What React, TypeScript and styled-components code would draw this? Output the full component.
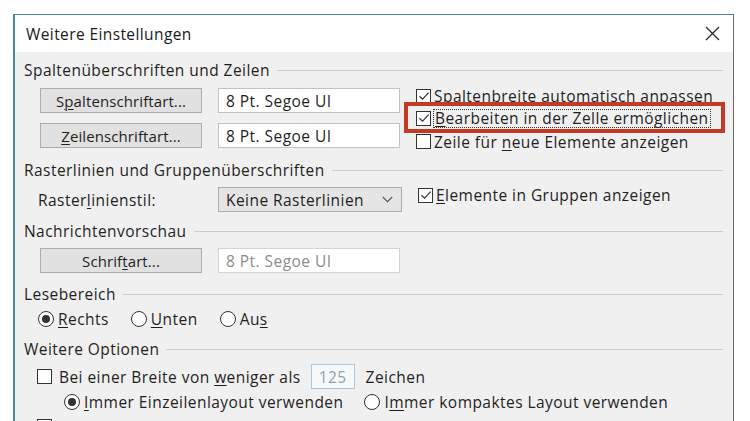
import React from "react";
import styled, { createGlobalStyle } from "styled-components";

const GlobalStyle = createGlobalStyle`
  html, body {
    margin: 0;
    padding: 0;
    background: #ffffff;
    height: 421px;
    overflow: hidden;
  }
  body {
    font-family: "Open Sans", "Noto Sans", "DejaVu Sans", sans-serif;
    color: #1f1f1f;
  }
`;

const Page = styled.div`
  padding: 14px 0 0 13px;
`;

const Dialog = styled.div`
  width: 721px;
  height: 520px;
  box-sizing: border-box;
  border: 1px solid #4a86a3;
  border-left-width: 2px;
  border-right-color: #6b6b6b;
  background: #f0f0f0;
  display: flex;
  flex-direction: column;
`;

const TitleBar = styled.div`
  height: 37px;
  background: #ffffff;
  display: flex;
  align-items: center;
  justify-content: space-between;
  padding: 0 12px 0 11px;
  flex-shrink: 0;
`;

const Title = styled.div`
  font-size: 15.5px;
  color: #1b1b1b;
  letter-spacing: 0.4px;
`;

const CloseButton = styled.div`
  width: 18px;
  height: 18px;
  display: flex;
  align-items: center;
  justify-content: center;
`;

const Body = styled.div`
  padding: 8px 10px 0 9px;
  display: flex;
  flex-direction: column;
  font-size: 15.5px;
  letter-spacing: 0.45px;
`;

const SectionHeader = styled.div<{ $mt?: number }>`
  display: flex;
  align-items: center;
  gap: 7px;
  height: 20px;
  margin-top: ${(p) => p.$mt ?? 0}px;
  white-space: nowrap;
  &::after {
    content: "";
    flex: 1;
    height: 1px;
    background: #cdcdcd;
    margin-top: 1px;
  }
`;

const SectionBody = styled.div<{ $mt?: number }>`
  display: flex;
  align-items: flex-start;
  margin-top: ${(p) => p.$mt ?? 0}px;
  padding-left: 16px;
`;

const FieldGrid = styled.div`
  display: grid;
  grid-template-columns: 162px 182px;
  column-gap: 16px;
  row-gap: 10px;
`;

const PushButton = styled.div`
  height: 25px;
  box-sizing: border-box;
  background: #e1e1e1;
  border: 1px solid #adadad;
  display: flex;
  align-items: center;
  justify-content: center;
  white-space: nowrap;
  font-size: 15px;
  letter-spacing: 0.1px;
`;

const TextField = styled.div<{ $disabled?: boolean }>`
  height: 25px;
  box-sizing: border-box;
  background: #ffffff;
  border: 1px solid ${(p) => (p.$disabled ? "#d4d4d4" : "#c2c2c2")};
  color: ${(p) => (p.$disabled ? "#8c8c8c" : "#1f1f1f")};
  display: flex;
  align-items: center;
  padding-left: 7px;
  white-space: nowrap;
`;

const Select = styled.div`
  width: 184px;
  height: 25px;
  box-sizing: border-box;
  background: #e5e5e5;
  border: 1px solid #adadad;
  display: flex;
  align-items: center;
  justify-content: space-between;
  padding: 0 8px 0 7px;
  white-space: nowrap;
`;

const Label = styled.div`
  width: 162px;
  height: 25px;
  display: flex;
  align-items: center;
  box-sizing: border-box;
  margin-left: -2px;
  margin-right: 18px;
  white-space: nowrap;
`;

const CheckColumn = styled.div`
  display: flex;
  flex-direction: column;
  margin-left: 16px;
  margin-top: -3px;
`;

const CheckRow = styled.div<{ $h?: number }>`
  position: relative;
  display: flex;
  align-items: center;
  gap: 3px;
  height: ${(p) => p.$h ?? 23}px;
  white-space: nowrap;
`;

const Box = styled.span`
  width: 15px;
  height: 15px;
  box-sizing: border-box;
  border: 1px solid #333;
  background: #fff;
  display: inline-flex;
  align-items: center;
  justify-content: center;
  flex-shrink: 0;
`;

const Radio = styled.span<{ $checked?: boolean }>`
  width: 16px;
  height: 16px;
  box-sizing: border-box;
  border: 1px solid #333;
  border-radius: 50%;
  background: #fff;
  display: inline-flex;
  align-items: center;
  justify-content: center;
  flex-shrink: 0;
  &::after {
    content: "";
    width: 8px;
    height: 8px;
    border-radius: 50%;
    background: ${(p) => (p.$checked ? "#333" : "transparent")};
  }
`;

const Focus = styled.span`
  outline: 1px dotted #333;
  outline-offset: 0;
  padding: 0 1px;
  line-height: 17px;
`;

const Highlight = styled.div`
  position: absolute;
  left: -12px;
  top: -5px;
  width: 321px;
  height: 31px;
  box-sizing: border-box;
  border: 4px solid #c33b22;
  pointer-events: none;
`;

const RadioGroup = styled.div<{ $mt?: number; $indent?: number; $gap?: number }>`
  display: flex;
  align-items: center;
  gap: ${(p) => p.$gap ?? 19}px;
  height: 20px;
  margin-top: ${(p) => p.$mt ?? 0}px;
  padding-left: ${(p) => p.$indent ?? 14}px;
`;

const RadioItem = styled.div`
  display: flex;
  align-items: center;
  gap: 4px;
  white-space: nowrap;
`;

const OptionRow = styled.div<{ $mt?: number }>`
  display: flex;
  align-items: center;
  height: 25px;
  margin-top: ${(p) => p.$mt ?? 0}px;
  padding-left: 13px;
  white-space: nowrap;
`;

const OptionText = styled.span`
  margin-left: 7px;
`;

const NumberField = styled.div`
  width: 44px;
  height: 25px;
  box-sizing: border-box;
  border: 1px solid #a9c9dc;
  background: #f6f8f9;
  color: #8ea4b2;
  display: flex;
  align-items: center;
  justify-content: center;
  margin: 0 11px 0 10px;
`;

const Dim = styled.span`
  color: #9a9a9a;
`;

const U = styled.u`
  text-decoration-thickness: 1px;
  text-underline-offset: 2px;
`;

const Check = () => (
  <svg width="12" height="12" viewBox="0 0 12 12">
    <path d="M1.5 6.2 L4.6 9.2 L10.6 2.6" fill="none" stroke="#333" strokeWidth="1.2" />
  </svg>
);

const CheckBox = ({ checked }: { checked?: boolean }) => <Box>{checked ? <Check /> : null}</Box>;

export default function App() {
  return (
    <>
      <GlobalStyle />
      <Page>
        <Dialog>
          <TitleBar>
            <Title>Weitere Einstellungen</Title>
            <CloseButton>
              <svg width="15" height="15" viewBox="0 0 15 15">
                <path d="M1 1 L14 14 M14 1 L1 14" stroke="#2a2a2a" strokeWidth="1.3" />
              </svg>
            </CloseButton>
          </TitleBar>
          <Body>
            <SectionHeader>Spaltenüberschriften und Zeilen</SectionHeader>
            <SectionBody $mt={8}>
              <FieldGrid>
                <PushButton>
                  S<U>p</U>altenschriftart...
                </PushButton>
                <TextField>8 Pt. Segoe UI</TextField>
                <PushButton>
                  <U>Z</U>eilenschriftart...
                </PushButton>
                <TextField>8 Pt. Segoe UI</TextField>
              </FieldGrid>
              <CheckColumn>
                <CheckRow $h={22}>
                  <CheckBox checked />
                  <span>Spaltenbreite automatisch anpassen</span>
                </CheckRow>
                <CheckRow $h={22}>
                  <CheckBox checked />
                  <Focus>
                    <U>B</U>earbeiten in der Zelle ermöglichen
                  </Focus>
                  <Highlight />
                </CheckRow>
                <CheckRow $h={25}>
                  <CheckBox />
                  <span>
                    Zeile für <U>n</U>eue Elemente anzeigen
                  </span>
                </CheckRow>
              </CheckColumn>
            </SectionBody>

            <SectionHeader $mt={6}>Rasterlinien und Gruppenüberschriften</SectionHeader>
            <SectionBody $mt={7}>
              <Label>
                Raster<U>l</U>inienstil:
              </Label>
              <Select>
                <span>Keine Rasterlinien</span>
                <svg width="11" height="7" viewBox="0 0 11 7">
                  <path d="M0.8 1 L5.5 5.7 L10.2 1" fill="none" stroke="#555" strokeWidth="1.1" />
                </svg>
              </Select>
              <CheckColumn>
                <CheckRow $h={22}>
                  <CheckBox checked />
                  <span>
                    <U>E</U>lemente in Gruppen anzeigen
                  </span>
                </CheckRow>
              </CheckColumn>
            </SectionBody>

            <SectionHeader $mt={9}>Nachrichtenvorschau</SectionHeader>
            <SectionBody $mt={7}>
              <FieldGrid>
                <PushButton>
                  Schrif<U>t</U>art...
                </PushButton>
                <TextField $disabled>8 Pt. Segoe UI</TextField>
              </FieldGrid>
            </SectionBody>

            <SectionHeader $mt={11}>Lesebereich</SectionHeader>
            <RadioGroup $mt={5} $gap={22}>
              <RadioItem>
                <Radio $checked />
                <span>
                  <U>R</U>echts
                </span>
              </RadioItem>
              <RadioItem>
                <Radio />
                <span>
                  <U>U</U>nten
                </span>
              </RadioItem>
              <RadioItem>
                <Radio />
                <span>
                  Au<U>s</U>
                </span>
              </RadioItem>
            </RadioGroup>

            <SectionHeader $mt={10}>Weitere Optionen</SectionHeader>
            <OptionRow $mt={5}>
              <CheckBox />
              <OptionText>
                Bei einer Breite von <U>w</U>eniger als
              </OptionText>
              <NumberField>125</NumberField>
              <span>Zeichen</span>
            </OptionRow>
            <RadioGroup $mt={3} $indent={40} $gap={21}>
              <RadioItem>
                <Radio $checked />
                <span>
                  <U>I</U>mmer Einzeilenlayout verwenden
                </span>
              </RadioItem>
              <RadioItem>
                <Radio />
                <span>
                  I<U>m</U>mer kompaktes Layout verwenden
                </span>
              </RadioItem>
            </RadioGroup>
            <OptionRow $mt={2}>
              <CheckBox />
              <OptionText>
                <Dim>Nachrichtenvorschau in der Nachrichtenliste anzeigen</Dim>
              </OptionText>
            </OptionRow>
          </Body>
        </Dialog>
      </Page>
    </>
  );
}
